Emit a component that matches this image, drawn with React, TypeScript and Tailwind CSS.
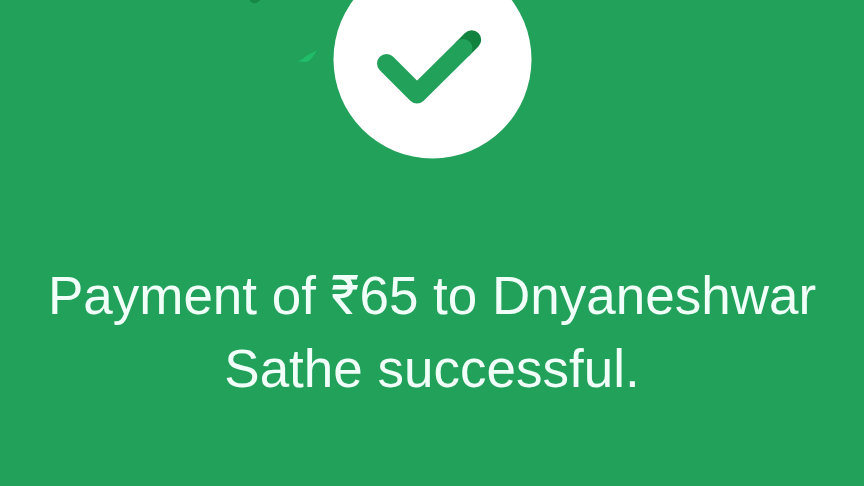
function SuccessMark() {
  return (
    <svg
      className="block h-[160px] w-[400px] shrink-0"
      viewBox="232 0 400 160"
      role="img"
      aria-label="Payment successful"
      fill="none"
    >
      {/* confetti */}
      <path d="M249.500 0 C251 2.500 253 3.500 255 3.200 C257.500 2.800 259 1.500 260 0 Z" fill="#168746" />
      <path d="M297.500 61.500 C302 60 304 57.500 307 55.500 L317.500 50 C314 54 312.500 59.500 306.500 62 Z" fill="#22bd69" />
      {/* badge */}
      <circle cx="432.500" cy="59.500" r="99" fill="#ffffff" />
      <path d="M463 48.500 L471.700 39.800" stroke="#12823f" strokeWidth="19" strokeLinecap="round" />
      <path
        d="M386.500 63.500 L417 94 L463 48.500"
        stroke="#22a15b"
        strokeWidth="19"
        strokeLinecap="round"
        strokeLinejoin="round"
      />
    </svg>
  );
}

export default function App() {
  return (
    <main className="flex min-h-screen flex-col items-center overflow-hidden bg-[#22a15b] font-['Liberation_Sans',Arial,sans-serif] text-[#f0fff8]">
      <SuccessMark />
      <h1 className="mt-[99px] w-full px-10 text-center text-[53px] leading-[73px] font-light">
        <span>Payment of </span>
        <span className="font-['Inter',sans-serif] font-normal">₹</span>
        <span>65 to Dnyaneshwar</span> <span>Sathe successful.</span>
      </h1>
    </main>
  );
}
